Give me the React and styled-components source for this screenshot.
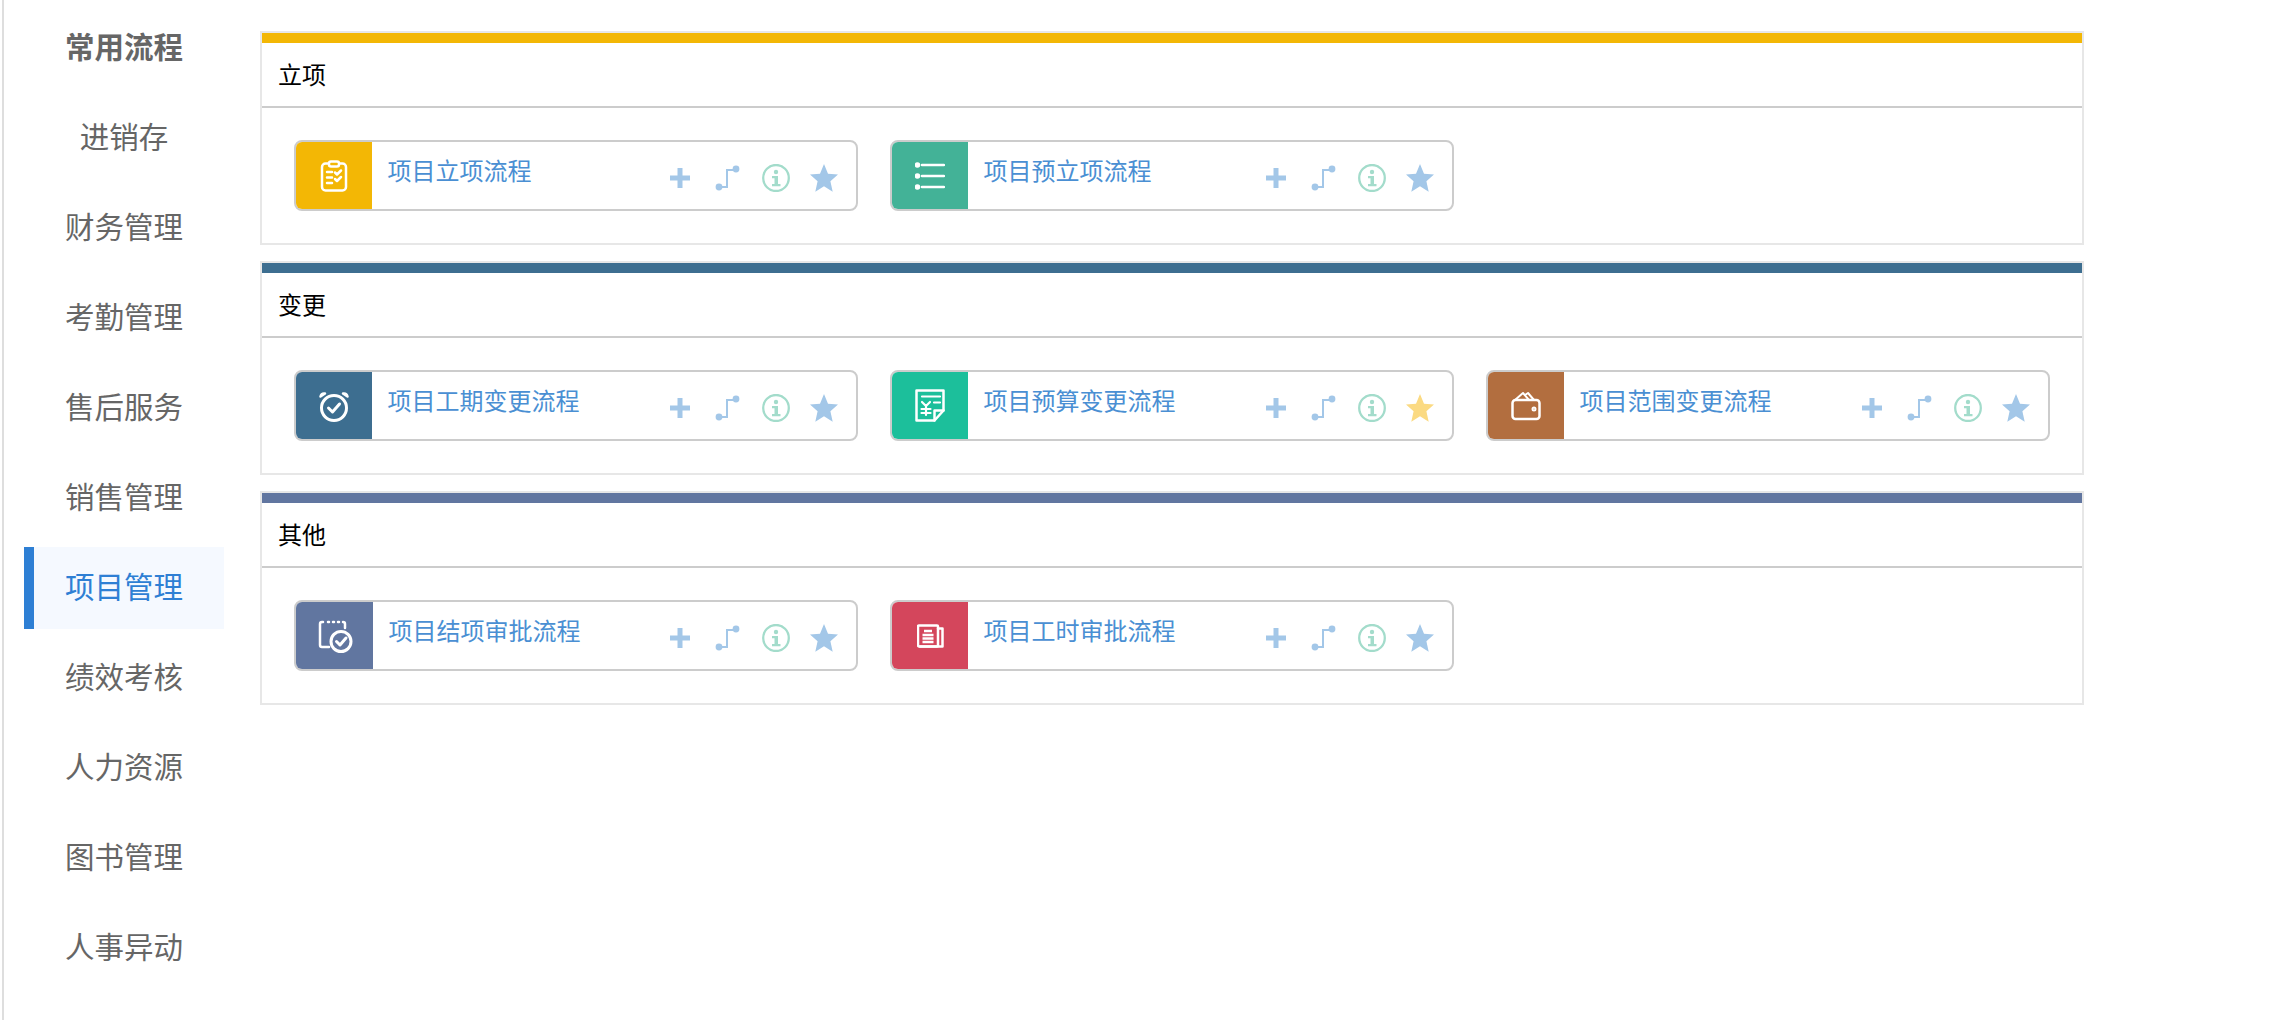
import React from 'react';
import styled, { createGlobalStyle } from 'styled-components';

const GlobalStyle = createGlobalStyle`
    html,
    body {
        margin: 0;
        padding: 0;
        background: #fff;
    }

    body {
        font-family: "Noto Sans CJK SC", "Liberation Sans", sans-serif;
    }
`;

const StyledPage = styled.div`
    display: flex;
    align-items: flex-start;
    min-height: 100vh;
    margin-left: 2px;
    border-left: 2px solid #dedede;
`;

const StyledSidebar = styled.ul`
    flex: none;
    width: 200px;
    margin: 0 36px 0 20px;
    padding: 7px 0 0;
    list-style: none;
`;

const StyledNavItem = styled.li`
    height: 82px;
    margin-bottom: 8px;
    line-height: 76px;
    text-align: center;
    font-size: 29.500px;
    font-weight: ${({ $bold }) => ($bold ? 700 : 400)};
    color: ${({ $active }) => ($active ? '#2e7fd4' : '#666')};
    background: ${({ $active }) => ($active ? '#f5f9ff' : 'transparent')};
    box-shadow: ${({ $active }) => ($active ? 'inset 10px 0 0 #2e7fd4' : 'none')};
`;

const StyledMain = styled.main`
    flex: none;
    display: flex;
    flex-direction: column;
    gap: 16px;
    width: 1824px;
    padding-top: 31px;
`;

const StyledPanel = styled.section`
    height: 214px;
    box-sizing: border-box;
    border: 2px solid #e7e7e7;
    background: #fff;
`;

const StyledPanelBar = styled.div`
    height: 10px;
    background: ${({ $color }) => $color};
`;

const StyledPanelTitle = styled.h3`
    height: 63px;
    margin: 0;
    padding-left: 16px;
    box-sizing: border-box;
    line-height: 62px;
    font-size: 24px;
    font-weight: 400;
    color: #000;
`;

const StyledPanelBody = styled.div`
    display: flex;
    gap: 32px;
    padding: 32px 0 0 32px;
    border-top: 2px solid #ccc;
`;

const StyledCard = styled.div`
    display: flex;
    flex: none;
    width: 564px;
    height: 71px;
    box-sizing: border-box;
    border: 2px solid #ccc;
    border-radius: 8px;
    overflow: hidden;
    background: #fff;
`;

const StyledCardIcon = styled.div`
    display: flex;
    flex: none;
    align-items: center;
    justify-content: center;
    width: ${({ $wide }) => ($wide ? 77 : 76)}px;
    background: ${({ $color }) => $color};

    svg {
        display: block;
        fill: none;
        stroke: #fff;
        stroke-width: 2.500;
        stroke-linecap: round;
        stroke-linejoin: round;
    }
`;

const StyledCardName = styled.div`
    flex: 1;
    padding: 10px 0 0 15.500px;
    font-size: 24px;
    line-height: 36px;
    color: #4a8fd3;
`;

const StyledActions = styled.div`
    display: flex;
    flex: none;
    gap: 20px;
    align-items: center;
    padding: 4px 18px 0 0;

    svg {
        display: block;
        width: 28px;
        height: 28px;
    }
`;

const ICON_BLUE = '#a3c7e8';

const ClipboardIcon = () => (
    <svg width="32" height="32" viewBox="0 0 32 32">
        <rect x="4" y="3.500" width="24" height="27" rx="3.500" />
        <rect x="11" y="1.500" width="10" height="5" rx="2" fill="#f3b705" />
        <path d="M9 12h5M9 17.500h5M9 23h5M17 12.500l2 2 4-4M17 19l2 2 4-4" />
    </svg>
);

const ListIcon = () => (
    <svg width="30" height="30" viewBox="0 0 30 30">
        <path d="M7 4h22M7 15h22M7 26h22" />
        <circle cx="2.500" cy="4" r="1.500" fill="#fff" />
        <circle cx="2.500" cy="15" r="1.500" fill="#fff" />
        <circle cx="2.500" cy="26" r="1.500" fill="#fff" />
    </svg>
);

const AlarmIcon = () => (
    <svg width="32" height="34" viewBox="0 0 32 34">
        <circle cx="16" cy="19" r="12.500" strokeWidth="3" />
        <path d="M10.500 19l4 4 7-8" strokeWidth="3" />
        <path d="M2.500 7.500a4 4 0 0 1 4.500-3zM29.500 7.500a4 4 0 0 0-4.500-3z" fill="#fff" />
    </svg>
);

const BudgetIcon = () => (
    <svg width="30" height="33" viewBox="0 0 30 33">
        <path d="M1.500 1.500h27v20l-9 10h-18z" />
        <path d="M19.500 31.500v-10h9" />
        <path d="M7 7.500h18M19 13.500h6M7 13l4 4 4-4M11 17v9M6.500 20h9M6.500 24h9" strokeWidth="2.200" />
    </svg>
);

const WalletIcon = () => (
    <svg width="30" height="30" viewBox="0 0 30 30">
        <rect x="1.500" y="9" width="27" height="19" rx="3" />
        <path d="M4 9l8-7 6 7M14 4l3-2 6 7" strokeWidth="2" />
        <circle cx="23" cy="18" r="1.500" strokeWidth="2" />
    </svg>
);

const CalendarCheckIcon = () => (
    <svg width="36" height="36" viewBox="0 0 36 36">
        <path d="M12 29H5a2 2 0 0 1-2-2V6a2 2 0 0 1 2-2h1M11 4h1M16 4h1M21 4h1M26 4a2 2 0 0 1 2 2v4" />
        <circle cx="24" cy="23.500" r="10" strokeWidth="3" />
        <path d="M19.500 23.500l3.500 3.500 6-7" strokeWidth="3" />
    </svg>
);

const NewsIcon = () => (
    <svg width="27" height="24" viewBox="0 0 27 24">
        <rect x="1" y="1.500" width="20" height="21" rx="1" />
        <path d="M21 4.500h4.500v18H3" />
        <path d="M7 7h8M5.500 11h11M5.500 14.500h11M5.500 18h11" strokeWidth="2.400" strokeLinecap="butt" />
    </svg>
);

const PlusIcon = () => (
    <svg viewBox="0 0 28 28">
        <path d="M14 4v20M4 14h20" fill="none" stroke={ICON_BLUE} strokeWidth="5" />
    </svg>
);

const RouteIcon = () => (
    <svg viewBox="0 0 28 28">
        <path d="M5 23h8V6h9" fill="none" stroke={ICON_BLUE} strokeWidth="2" />
        <circle cx="5" cy="23" r="3.400" fill={ICON_BLUE} />
        <circle cx="22" cy="5" r="3.400" fill={ICON_BLUE} />
    </svg>
);

const InfoIcon = () => (
    <svg viewBox="0 0 28 28">
        <ellipse cx="14" cy="14" rx="12.800" ry="13" fill="none" stroke="#a3dccb" strokeWidth="2.300" />
        <circle cx="14" cy="8" r="2.200" fill="#a3dccb" />
        <path d="M10 12h6v8h2.500v2.200h-8.500V20h2.500v-5.800H10z" fill="#a3dccb" />
    </svg>
);

const StarIcon = ({ color }) => (
    <svg viewBox="0 0 28 28">
        <path d="M14 0l4 9.700 10 .9-7.600 6.700 2.300 10.500L14 22.300l-8.700 5.500 2.300-10.500L0 10.600l10-.9z" fill={color} />
    </svg>
);

const navItems = ['进销存', '财务管理', '考勤管理', '售后服务', '销售管理', '项目管理', '绩效考核', '人力资源', '图书管理', '人事异动'];

const panels = [
    {
        title: '立项',
        color: '#f3b705',
        cards: [
            { name: '项目立项流程', color: '#f3b705', Icon: ClipboardIcon },
            { name: '项目预立项流程', color: '#43b297', Icon: ListIcon },
        ],
    },
    {
        title: '变更',
        color: '#3d6e90',
        cards: [
            { name: '项目工期变更流程', color: '#3d6e90', Icon: AlarmIcon },
            { name: '项目预算变更流程', color: '#1cbf9b', Icon: BudgetIcon, starred: true },
            { name: '项目范围变更流程', color: '#b26e3f', Icon: WalletIcon },
        ],
    },
    {
        title: '其他',
        color: '#6176a0',
        cards: [
            { name: '项目结项审批流程', color: '#6176a0', Icon: CalendarCheckIcon, wide: true },
            { name: '项目工时审批流程', color: '#d4465c', Icon: NewsIcon },
        ],
    },
];

const App = () => (
    <>
        <GlobalStyle />
        <StyledPage>
            <StyledSidebar>
                <StyledNavItem $bold>常用流程</StyledNavItem>
                {navItems.map(item => (
                    <StyledNavItem key={item} $active={item === '项目管理'}>
                        {item}
                    </StyledNavItem>
                ))}
            </StyledSidebar>

            <StyledMain>
                {panels.map(panel => (
                    <StyledPanel key={panel.title}>
                        <StyledPanelBar $color={panel.color} />
                        <StyledPanelTitle>{panel.title}</StyledPanelTitle>
                        <StyledPanelBody>
                            {panel.cards.map(({ name, color, Icon, starred, wide }) => (
                                <StyledCard key={name}>
                                    <StyledCardIcon $color={color} $wide={wide}>
                                        <Icon />
                                    </StyledCardIcon>
                                    <StyledCardName>{name}</StyledCardName>
                                    <StyledActions>
                                        <PlusIcon />
                                        <RouteIcon />
                                        <InfoIcon />
                                        <StarIcon color={starred ? '#fbda82' : ICON_BLUE} />
                                    </StyledActions>
                                </StyledCard>
                            ))}
                        </StyledPanelBody>
                    </StyledPanel>
                ))}
            </StyledMain>
        </StyledPage>
    </>
);

export default App;
